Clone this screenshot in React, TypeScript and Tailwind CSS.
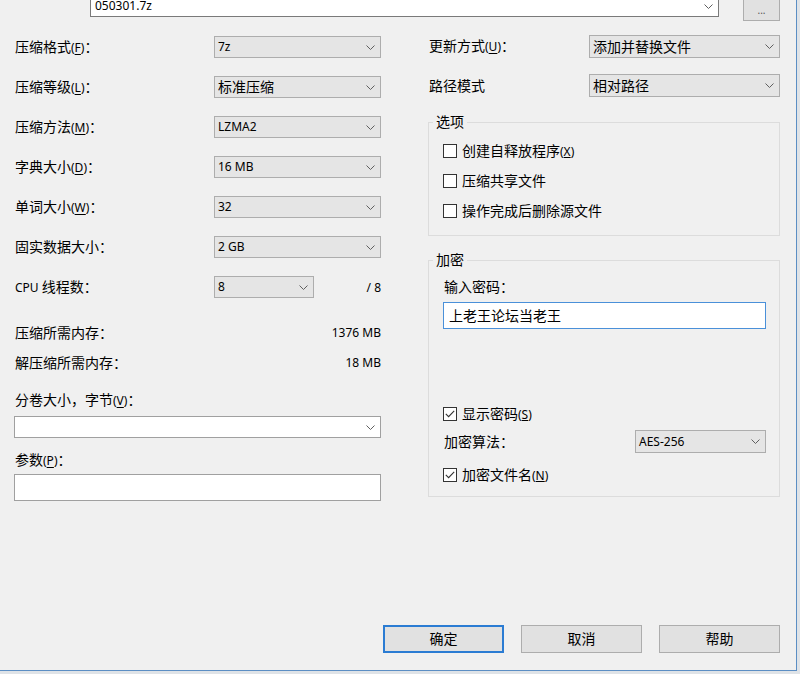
import React from "react";

const Chevron = () => (
  <svg width="9" height="5" viewBox="0 0 9 5" className="shrink-0">
    <polyline points="0.5,0.5 4.5,4.5 8.5,0.5" fill="none" stroke="#5f5f5f" strokeWidth="1" />
  </svg>
);

function Combo({ className, children }: { className: string; children: React.ReactNode }) {
  return (
    <div className={"flex items-center pl-[3px] pr-[5px] border " + className}>
      <div className="flex-1 flex items-center whitespace-nowrap">{children}</div>
      <Chevron />
    </div>
  );
}

function L({ t, k, colon = true }: { t: string; k?: string; colon?: boolean }) {
  return (
    <span className="whitespace-nowrap">
      {t}
      {k && (
        <span className="text-[12px]">
          (<u className="underline-offset-2">{k}</u>)
        </span>
      )}
      {colon && "："}
    </span>
  );
}

const Lat = ({ children }: { children: React.ReactNode }) => <span className="text-[12px]">{children}</span>;

function Check({ checked, children }: { checked?: boolean; children: React.ReactNode }) {
  return (
    <div className="h-[20px] flex items-center">
      <div className="w-[14px] h-[14px] bg-white border border-[#333333] flex items-center justify-center shrink-0">
        {checked && (
          <svg width="10" height="8" viewBox="0 0 10 8">
            <polyline points="0.8,3.8 3.6,6.6 9.2,0.8" fill="none" stroke="#333333" strokeWidth="1.1" />
          </svg>
        )}
      </div>
      <span className="ml-[5px] whitespace-nowrap">{children}</span>
    </div>
  );
}

function LeftRow({ label, children, mt }: { label: React.ReactNode; children: React.ReactNode; mt: string }) {
  return (
    <div className={"h-[22px] flex items-center " + mt}>
      <div className="w-[200px] pl-px">{label}</div>
      {children}
    </div>
  );
}

export default function App() {
  const grayCombo = "h-[22px] w-[167px] bg-[#e5e5e5] border-[#adadad]";
  return (
    <div className="w-[800px] h-[674px] bg-[#dfe3e7] overflow-hidden font-['Noto_Sans','Noto_Sans_CJK_SC',sans-serif] text-[14px] leading-[20px] text-black">
      <div className="w-[797px] h-[671px] bg-[#f0f0f0] border-r border-b border-[#5b8ec4] flex flex-col">
        {/* top row */}
        <div className="h-[21px] flex items-start shrink-0">
          <Combo className="ml-[90px] -mt-[5px] w-[629px] h-[22px] bg-white border-[#7a7a7a] !pl-[4px]">
            <Lat>050301.7z</Lat>
          </Combo>
          <div className="ml-[24px] -mt-[2px] w-[37px] h-[23px] bg-[#e1e1e1] border border-[#adadad] flex items-center justify-center text-[10px] text-[#555555] leading-none">
            ...
          </div>
        </div>

        {/* body */}
        <div className="flex">
          {/* left column */}
          <div className="ml-[14px] w-[367px] flex flex-col">
            <LeftRow mt="mt-[15px]" label={<L t="压缩格式" k="F" />}>
              <Combo className={grayCombo}><Lat>7z</Lat></Combo>
            </LeftRow>
            <LeftRow mt="mt-[18px]" label={<L t="压缩等级" k="L" />}>
              <Combo className={grayCombo}>标准压缩</Combo>
            </LeftRow>
            <LeftRow mt="mt-[18px]" label={<L t="压缩方法" k="M" />}>
              <Combo className={grayCombo}><Lat>LZMA2</Lat></Combo>
            </LeftRow>
            <LeftRow mt="mt-[18px]" label={<L t="字典大小" k="D" />}>
              <Combo className={grayCombo}><Lat>16 MB</Lat></Combo>
            </LeftRow>
            <LeftRow mt="mt-[18px]" label={<L t="单词大小" k="W" />}>
              <Combo className={grayCombo}><Lat>32</Lat></Combo>
            </LeftRow>
            <LeftRow mt="mt-[18px]" label={<L t="固实数据大小" />}>
              <Combo className={grayCombo}><Lat>2 GB</Lat></Combo>
            </LeftRow>
            <LeftRow
              mt="mt-[18px]"
              label={
                <span className="whitespace-nowrap">
                  <Lat>CPU </Lat>线程数：
                </span>
              }
            >
              <Combo className="h-[22px] w-[100px] bg-[#e5e5e5] border-[#adadad]"><Lat>8</Lat></Combo>
              <div className="flex-1 text-right"><Lat>/ 8</Lat></div>
            </LeftRow>

            <div className="mt-[25px] h-[20px] flex items-center justify-between pl-px">
              <L t="压缩所需内存" />
              <Lat>1376 MB</Lat>
            </div>
            <div className="mt-[10px] h-[20px] flex items-center justify-between pl-px">
              <L t="解压缩所需内存" />
              <Lat>18 MB</Lat>
            </div>
            <div className="mt-[17px] h-[20px] flex items-center pl-px">
              <L t="分卷大小，字节" k="V" />
            </div>
            <Combo className="mt-[6px] h-[22px] w-[367px] bg-white border-[#a0a0a0]">
              <span />
            </Combo>
            <div className="mt-[12px] h-[20px] flex items-center pl-px">
              <L t="参数" k="P" />
            </div>
            <div className="mt-[4px] h-[27px] w-[367px] bg-white border border-[#a0a0a0]" />
          </div>

          {/* right column */}
          <div className="ml-[47px] w-[352px] flex flex-col">
            <div className="mt-[14px] h-[23px] flex items-center">
              <div className="w-[161px] pl-px"><L t="更新方式" k="U" /></div>
              <Combo className="h-[23px] w-[191px] bg-[#e5e5e5] border-[#adadad]">添加并替换文件</Combo>
            </div>
            <div className="mt-[16px] h-[23px] flex items-center">
              <div className="w-[161px] pl-px">路径模式</div>
              <Combo className="h-[23px] w-[191px] bg-[#e5e5e5] border-[#adadad]">相对路径</Combo>
            </div>

            <fieldset className="mt-[15px] border border-[#dcdcdc] p-0 m-0">
              <legend className="ml-[4px] px-[3px] leading-[20px]">选项</legend>
              <div className="pl-[14px] pb-[14px] flex flex-col">
                <div className="mt-[9px]">
                  <Check>
                    创建自释放程序<span className="text-[12px]">(<u>X</u>)</span>
                  </Check>
                </div>
                <div className="mt-[10px]">
                  <Check>压缩共享文件</Check>
                </div>
                <div className="mt-[10px]">
                  <Check>操作完成后删除源文件</Check>
                </div>
              </div>
            </fieldset>

            <fieldset className="mt-[14px] border border-[#dcdcdc] p-0 m-0">
              <legend className="ml-[4px] px-[3px] leading-[20px]">加密</legend>
              <div className="pl-[14px] pb-[11px] flex flex-col">
                <div className="mt-[7px] h-[20px] flex items-center pl-px">输入密码：</div>
                <div className="mt-[5px] h-[27px] w-[323px] bg-white border border-[#4a90d9] flex items-center pl-[5px]">
                  上老王论坛当老王
                </div>
                <div className="mt-[75px]">
                  <Check checked>
                    显示密码<span className="text-[12px]">(<u>S</u>)</span>
                  </Check>
                </div>
                <div className="mt-[6px] h-[23px] flex items-center">
                  <div className="w-[192px] pl-px">加密算法：</div>
                  <Combo className="h-[23px] w-[131px] bg-[#e5e5e5] border-[#adadad]"><Lat>AES-256</Lat></Combo>
                </div>
                <div className="mt-[12px]">
                  <Check checked>
                    加密文件名<span className="text-[12px]">(<u>N</u>)</span>
                  </Check>
                </div>
              </div>
            </fieldset>
          </div>
        </div>

        <div className="flex-1" />

        {/* buttons */}
        <div className="flex justify-end gap-[17px] pr-[16px] pb-[17px] shrink-0">
          <div className="w-[121px] h-[28px] bg-[#e1e1e1] border-2 border-[#2b7cd3] flex items-center justify-center">确定</div>
          <div className="w-[121px] h-[28px] bg-[#e1e1e1] border border-[#adadad] flex items-center justify-center">取消</div>
          <div className="w-[121px] h-[28px] bg-[#e1e1e1] border border-[#adadad] flex items-center justify-center">帮助</div>
        </div>
      </div>
    </div>
  );
}
